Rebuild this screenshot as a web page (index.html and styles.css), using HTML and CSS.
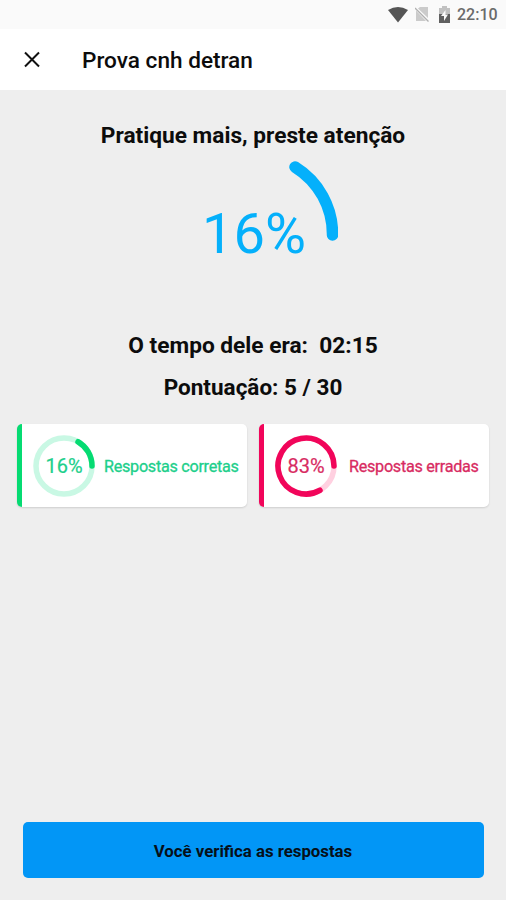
FILE: index.html
```html
<!DOCTYPE html>
<html lang="pt">
<head>
<meta charset="utf-8">
<title>Prova cnh detran</title>
<link rel="stylesheet" href="styles.css">
</head>
<body>
<div class="screen">
  <div class="status">
    <svg class="wifi" width="20" height="16" viewBox="0 0 20 16"><path d="M0 3Q10-3 20 3L10 15.500Z" fill="#555"/></svg>
    <svg class="sim" width="14" height="15" viewBox="0 0 14 15"><path d="M5 0H13V11L3 1.500ZM1 3.500L11 14H1Z" fill="#cbcbcb"/><path d="M0 1L13.500 14.500" stroke="#b0b0b0" stroke-width="1.300"/></svg>
    <svg class="battery" width="11" height="17" viewBox="0 0 11 17"><path d="M3 0H8V2H11V8H0V2H3Z" fill="#c1c1c1"/><path d="M0 8H11V17H0Z" fill="#606060"/><path d="M6.500 4L2 10H5V15L9 8.500H6.500Z" fill="#fafafa"/></svg>
    <span class="clock">22:10</span>
  </div>
  <header class="bar">
    <svg class="close" width="18" height="18" viewBox="0 0 18 18"><path d="M2 1.500L16 15.500M16 1.500L2 15.500" stroke="#111" stroke-width="2" fill="none"/></svg>
    <h1 class="title">Prova cnh detran</h1>
  </header>
  <main class="content">
    <h2 class="message">Pratique mais, preste atenção</h2>
    <div class="score">
      <svg class="score-ring" width="170" height="170" viewBox="-85 -85 170 170"><path d="M42-68A79 79 0 0 1 79.500 0" fill="none" stroke="#04b0fb" stroke-width="11.500" stroke-linecap="round"/></svg>
      <span class="score-value">16%</span>
    </div>
    <p class="line time">O tempo dele era:&nbsp; 02:15</p>
    <p class="line points">Pontuação: 5 / 30</p>
    <div class="cards">
      <section class="card correct">
        <div class="ring">
          <svg width="62" height="62" viewBox="-31 -31 62 62"><circle r="28" fill="none" stroke="#c9f8e4" stroke-width="5.500"/><path d="M14-24.250A28 28 0 0 1 28 0" fill="none" stroke="#05db72" stroke-width="5.500" stroke-linecap="round"/></svg>
          <span class="ring-value">16%</span>
        </div>
        <span class="label">Respostas corretas</span>
      </section>
      <section class="card wrong">
        <div class="ring">
          <svg width="62" height="62" viewBox="-31 -31 62 62"><circle r="28" fill="none" stroke="#ffd0e0" stroke-width="5.500"/><path d="M14 24.250A28 28 0 1 1 28 0" fill="none" stroke="#f1055a" stroke-width="5.500" stroke-linecap="round"/></svg>
          <span class="ring-value">83%</span>
        </div>
        <span class="label">Respostas erradas</span>
      </section>
    </div>
    <button class="review">Você verifica as respostas</button>
  </main>
</div>
</body>
</html>
```
FILE: styles.css
```css
* { box-sizing: border-box; margin: 0; padding: 0; }
body { font-family: Roboto, "Liberation Sans", sans-serif; color: #0c0c0c; }
.screen { width: 506px; height: 900px; display: flex; flex-direction: column; background: #eee; overflow: hidden; }
.status { height: 29px; display: flex; align-items: center; padding-left: 388px; background: #fafafa; }
.sim { margin-left: 7px; }
.battery { margin-left: 10px; }
.clock { margin-left: 7px; font-size: 16px; line-height: 29px; font-weight: 500; color: #6a6a6a; white-space: nowrap; }
.bar { height: 61px; display: flex; align-items: center; padding-left: 23px; background: #fff; }
.title { margin-left: 41px; padding-top: 2px; font-size: 22.6px; line-height: 28px; font-weight: 500; white-space: nowrap; }
.content { flex: 1; display: flex; flex-direction: column; align-items: center; }
.message { margin-top: 32px; font-size: 22.7px; line-height: 28px; font-weight: 700; white-space: nowrap; }
.score { display: grid; place-items: center; width: 170px; height: 170px; }
.score-ring, .score-value { grid-area: 1 / 1; }
.score-value { padding-left: 2px; font-size: 56px; line-height: 60px; color: #04b0fb; transform: translateY(-1px); }
.line { font-size: 22.7px; line-height: 28px; font-weight: 700; white-space: nowrap; }
.time { margin-top: 12px; }
.points { margin-top: 13px; font-size: 22.5px; }
.cards { display: grid; grid-template-columns: 230px 230px; gap: 12px; margin-top: 23px; }
.card { height: 83px; display: flex; align-items: center; padding-left: 11px; border-left: 5px solid; border-radius: 5px; background: #fff; box-shadow: 0 1px 2px #0002; white-space: nowrap; }
.correct { border-color: #05db72; color: #20cf8b; }
.wrong { border-color: #f1055a; color: #d82b62; }
.ring { display: grid; place-items: center; width: 62px; height: 62px; }
.ring svg, .ring-value { grid-area: 1 / 1; }
.ring-value { font-size: 20px; line-height: 24px; -webkit-text-stroke: 0.2px; }
.label { margin-left: 9px; padding-top: 2px; font-size: 16.2px; line-height: 20px; letter-spacing: -0.28px; font-weight: 400; -webkit-text-stroke: 0.3px; }
.wrong .label { margin-left: 12px; }
.review { width: 461px; height: 56px; margin-top: auto; margin-bottom: 22px; padding-top: 1px; border: 0; border-radius: 5px; background: #0296f6; color: #061019; font: 700 16.8px/20px Roboto, "Liberation Sans", sans-serif; }
```
